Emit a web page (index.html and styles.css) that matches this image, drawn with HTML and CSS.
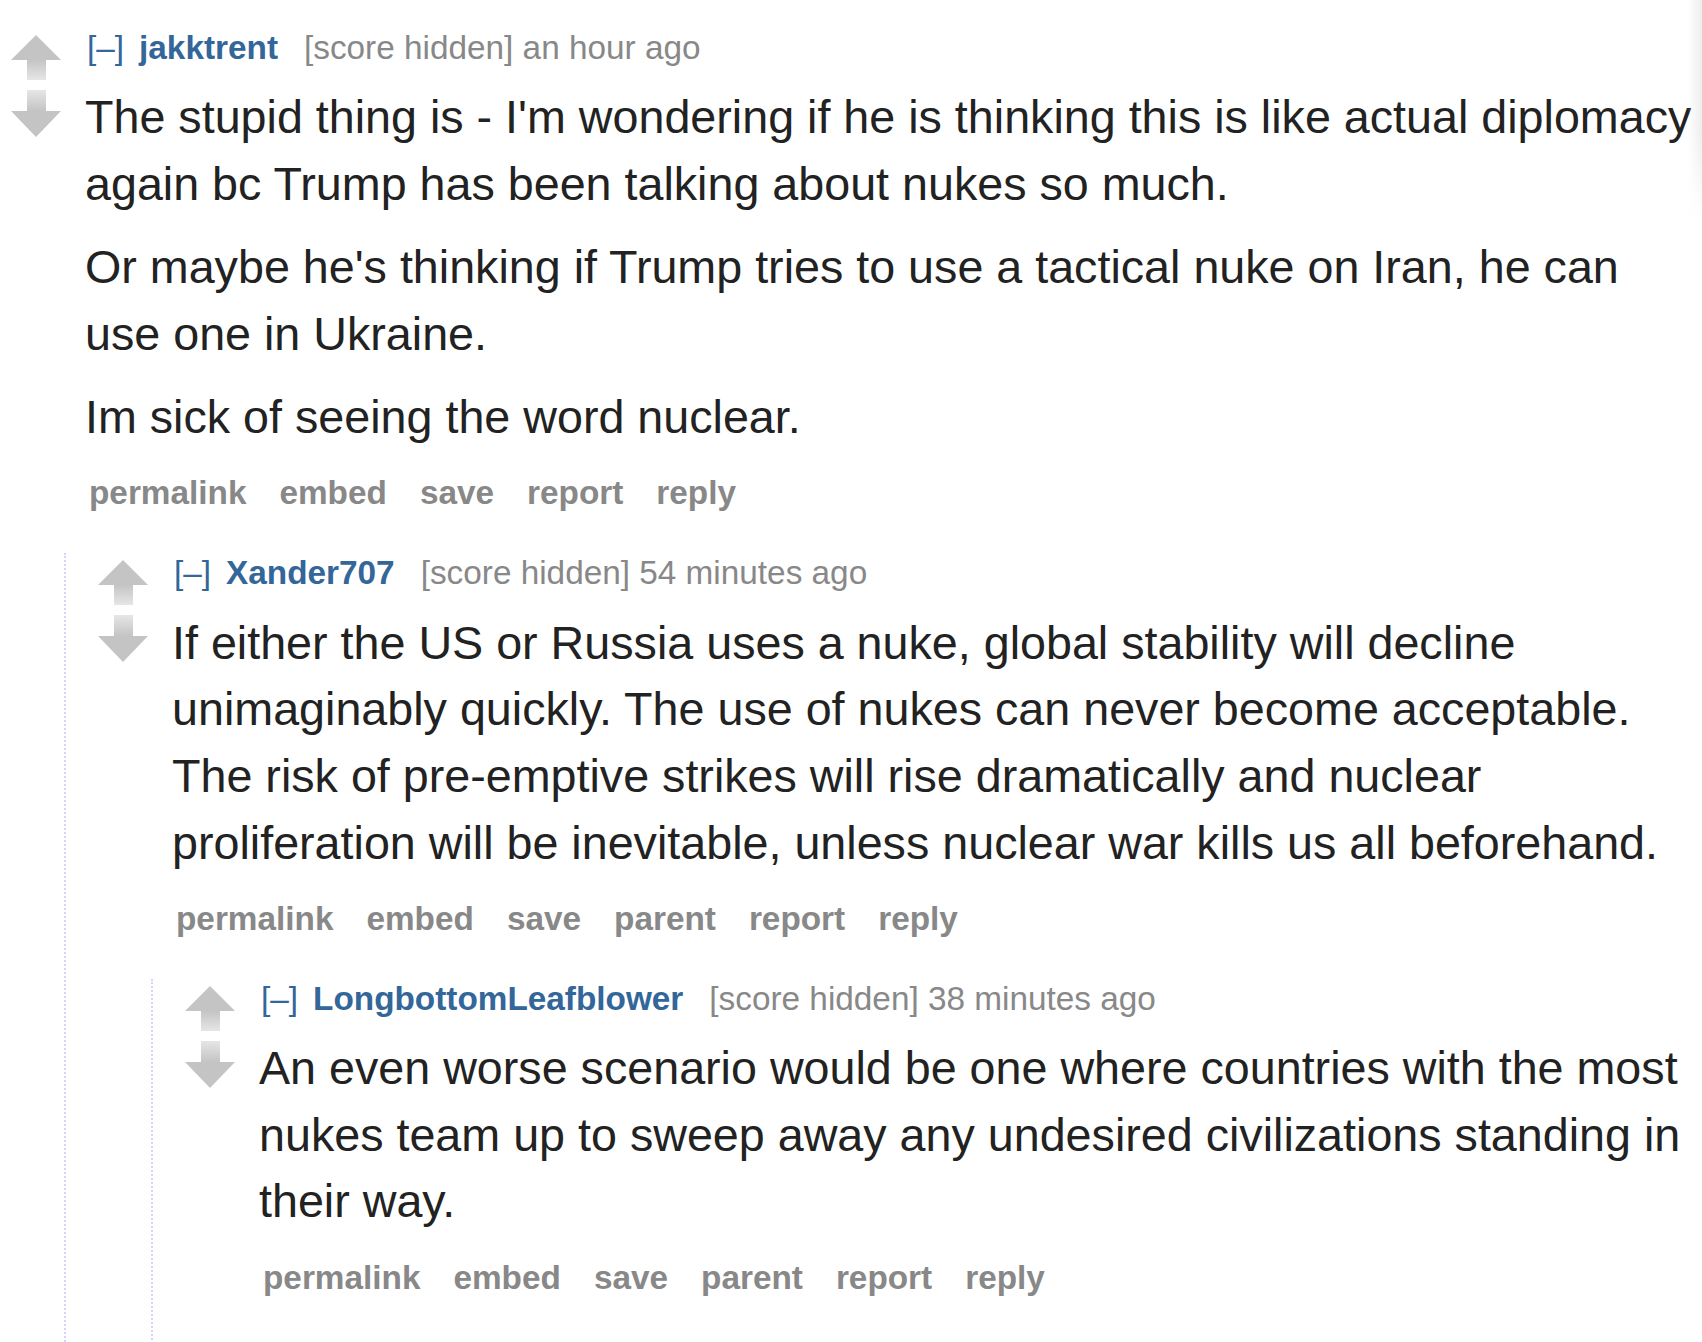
FILE: index.html
```html
<!DOCTYPE html>
<html lang="en">
<head>
<meta charset="utf-8">
<title>Comments</title>
<link rel="stylesheet" href="styles.css">
</head>
<body>
<div class="edge-shade"></div>
<div class="thread">
  <div class="comment">
    <div class="midcol">
      <svg class="arrow" width="50" height="47" viewBox="0 0 50 47"><defs><linearGradient id="fu1" x1="0" y1="0" x2="0" y2="1"><stop offset="0" stop-color="#c4c4c4"/><stop offset="1" stop-color="#e6e6e6"/></linearGradient></defs><polygon points="25,0 50,25 0,25" fill="#c4c4c4"/><rect x="16" y="25" width="19" height="20" fill="url(#fu1)"/></svg>
      <svg class="arrow" width="50" height="47" viewBox="0 0 50 47"><defs><linearGradient id="fd1" x1="0" y1="0" x2="0" y2="1"><stop offset="0" stop-color="#e6e6e6"/><stop offset="1" stop-color="#c4c4c4"/></linearGradient></defs><rect x="16" y="0" width="19" height="21" fill="url(#fd1)"/><polygon points="0,21 50,21 25,47" fill="#c4c4c4"/></svg>
    </div>
    <div class="entry">
      <p class="tagline"><a class="expand">[–]</a><a class="author">jakktrent</a><span class="meta">[score hidden] an hour ago</span></p>
      <div class="md">
        <p>The stupid thing is - I'm wondering if he is thinking this is like actual diplomacy again bc Trump has been talking about nukes so much.</p>
        <p>Or maybe he's thinking if Trump tries to use a tactical nuke on Iran, he can use one in Ukraine.</p>
        <p>Im sick of seeing the word nuclear.</p>
      </div>
      <ul class="buttons">
        <li>permalink</li><li>embed</li><li>save</li><li>report</li><li>reply</li>
      </ul>
    </div>
    <div class="child">
      <div class="comment">
        <div class="midcol">
          <svg class="arrow" width="50" height="47" viewBox="0 0 50 47"><defs><linearGradient id="fu2" x1="0" y1="0" x2="0" y2="1"><stop offset="0" stop-color="#c4c4c4"/><stop offset="1" stop-color="#e6e6e6"/></linearGradient></defs><polygon points="25,0 50,25 0,25" fill="#c4c4c4"/><rect x="16" y="25" width="19" height="20" fill="url(#fu2)"/></svg>
          <svg class="arrow" width="50" height="47" viewBox="0 0 50 47"><defs><linearGradient id="fd2" x1="0" y1="0" x2="0" y2="1"><stop offset="0" stop-color="#e6e6e6"/><stop offset="1" stop-color="#c4c4c4"/></linearGradient></defs><rect x="16" y="0" width="19" height="21" fill="url(#fd2)"/><polygon points="0,21 50,21 25,47" fill="#c4c4c4"/></svg>
        </div>
        <div class="entry">
          <p class="tagline"><a class="expand">[–]</a><a class="author">Xander707</a><span class="meta">[score hidden] 54 minutes ago</span></p>
          <div class="md">
            <p>If either the US or Russia uses a nuke, global stability will decline unimaginably quickly. The use of nukes can never become acceptable. The risk of pre-emptive strikes will rise dramatically and nuclear proliferation will be inevitable, unless nuclear war kills us all beforehand.</p>
          </div>
          <ul class="buttons">
            <li>permalink</li><li>embed</li><li>save</li><li>parent</li><li>report</li><li>reply</li>
          </ul>
        </div>
        <div class="child">
          <div class="comment">
            <div class="midcol">
              <svg class="arrow" width="50" height="47" viewBox="0 0 50 47"><defs><linearGradient id="fu3" x1="0" y1="0" x2="0" y2="1"><stop offset="0" stop-color="#c4c4c4"/><stop offset="1" stop-color="#e6e6e6"/></linearGradient></defs><polygon points="25,0 50,25 0,25" fill="#c4c4c4"/><rect x="16" y="25" width="19" height="20" fill="url(#fu3)"/></svg>
              <svg class="arrow" width="50" height="47" viewBox="0 0 50 47"><defs><linearGradient id="fd3" x1="0" y1="0" x2="0" y2="1"><stop offset="0" stop-color="#e6e6e6"/><stop offset="1" stop-color="#c4c4c4"/></linearGradient></defs><rect x="16" y="0" width="19" height="21" fill="url(#fd3)"/><polygon points="0,21 50,21 25,47" fill="#c4c4c4"/></svg>
            </div>
            <div class="entry">
              <p class="tagline"><a class="expand">[–]</a><a class="author">LongbottomLeafblower</a><span class="meta">[score hidden] 38 minutes ago</span></p>
              <div class="md">
                <p>An even worse scenario would be one where countries with the most nukes team up to sweep away any undesired civilizations standing in their way.</p>
              </div>
              <ul class="buttons">
                <li>permalink</li><li>embed</li><li>save</li><li>parent</li><li>report</li><li>reply</li>
              </ul>
            </div>
          </div>
        </div>
      </div>
    </div>
  </div>
</div>
</body>
</html>
```

FILE: styles.css
```css
html, body {
  margin: 0;
  padding: 0;
  background: #ffffff;
}

body {
  font-family: "Liberation Sans", Arial, sans-serif;
  width: 1702px;
  height: 1342px;
  overflow: hidden;
  position: relative;
}

.edge-shade {
  position: absolute;
  top: 0;
  right: 0;
  width: 14px;
  height: 220px;
  background: linear-gradient(to right, rgba(235,235,235,0), rgba(235,235,235,0.9));
  -webkit-mask-image: linear-gradient(to bottom, #000 60%, transparent);
  mask-image: linear-gradient(to bottom, #000 60%, transparent);
}

.thread {
  padding: 28px 7px 0 11px;
}

.comment {
  display: grid;
  grid-template-columns: 76px 1fr;
}

.midcol {
  display: flex;
  flex-direction: column;
  gap: 8px;
  padding-top: 7px;
}

.arrow {
  display: block;
  filter: blur(0.6px);
}

.entry {
  min-width: 0;
}

.tagline {
  margin: 0;
  font-size: 33.33px;
  line-height: 40px;
  color: #888888;
  white-space: nowrap;
}

.expand {
  color: #369;
  margin-right: 15px;
}

.author {
  color: #369;
  font-weight: bold;
  margin-right: 26px;
}

.md {
  color: #222222;
  font-size: 46.67px;
  line-height: 66.67px;
  margin-left: -2px;
  margin-top: -0.5px;
}

.md p {
  margin: 16.67px 0;
}

.buttons {
  list-style: none;
  margin: 0;
  padding: 6px 0 0 2px;
  display: flex;
  gap: 33px;
  font-size: 33.33px;
  line-height: 40px;
  font-weight: bold;
  color: #888888;
}

.child {
  grid-column: 1 / -1;
  margin: 40px 0 0 53px;
  border-left: 2px dotted #d4d4fa;
  padding: 0 0 46px 32px;
}
```
